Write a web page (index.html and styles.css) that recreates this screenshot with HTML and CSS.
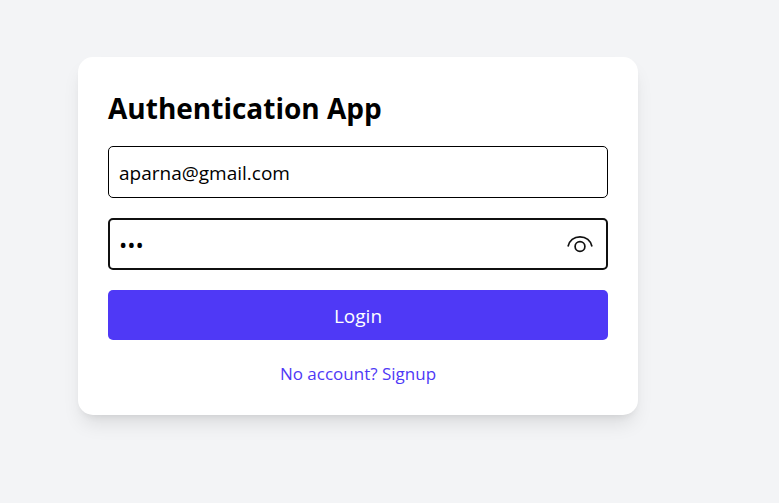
FILE: index.html
```html
<!DOCTYPE html>
<html lang="en">
<head>
<meta charset="utf-8">
<meta name="viewport" content="width=device-width, initial-scale=1">
<title>Authentication App</title>
<link rel="stylesheet" href="styles.css">
</head>
<body>
<main class="card">
  <h1 class="title">Authentication App</h1>
  <form class="form">
    <input class="field" type="email" aria-label="Email" value="aparna@gmail.com">
    <div class="password">
      <input class="field field-active" type="password" aria-label="Password" value="123">
      <button class="reveal" type="button" aria-label="Show password">
        <svg width="26" height="18" viewBox="0 0 26 18" fill="none" stroke="#111" stroke-width="1.7">
          <path d="M1 11.5C2.2 5.500 7 1.800 13 1.800S23.800 5.500 25 11.500"/>
          <circle cx="13" cy="11.500" r="4.900"/>
        </svg>
      </button>
    </div>
    <button class="submit" type="submit">Login</button>
  </form>
  <a class="switch" href="#signup">No account? Signup</a>
</main>
</body>
</html>
```
FILE: styles.css
```css
* {
  box-sizing: border-box;
}

body {
  margin: 0;
  min-height: 100vh;
  padding: 57px 141px 57px 78px;
  background: #f3f4f6;
  color: #000;
  font-family: "Segoe UI", "Open Sans", "Noto Sans", sans-serif;
}

.card {
  display: flex;
  flex-direction: column;
  max-width: 560px;
  padding: 30px 30px 29px;
  border-radius: 15px;
  background: #fff;
  box-shadow: 0 12px 19px -4px rgb(0 0 0 / 0.1), 0 5px 8px -5px rgb(0 0 0 / 0.1);
}

.title {
  margin: 0 0 17px;
  font-size: 28px;
  line-height: 42px;
  font-weight: 700;
}

.form {
  display: flex;
  flex-direction: column;
  gap: 20px;
}

.field {
  display: block;
  width: 100%;
  height: 52px;
  padding: 2px 10px 0;
  border: 1px solid #000;
  border-radius: 5px;
  outline: none;
  background: #fff;
  color: #000;
  font-family: inherit;
  font-size: 19px;
}

.field-active {
  padding: 0 9px;
  border: 2px solid #101010;
  font-size: 22px;
}

.password {
  position: relative;
}

.reveal {
  position: absolute;
  inset: 0 15px 0 auto;
  display: flex;
  align-items: center;
  padding: 0;
  border: 0;
  background: none;
}

.submit {
  height: 50px;
  padding: 2px 0 0;
  border: 0;
  border-radius: 5px;
  background: #4f39f6;
  color: #fff;
  font-family: inherit;
  font-size: 19px;
}

.switch {
  align-self: center;
  margin-top: 22px;
  color: #4f39f6;
  font-size: 17px;
  line-height: 24px;
  text-decoration: none;
}
```
